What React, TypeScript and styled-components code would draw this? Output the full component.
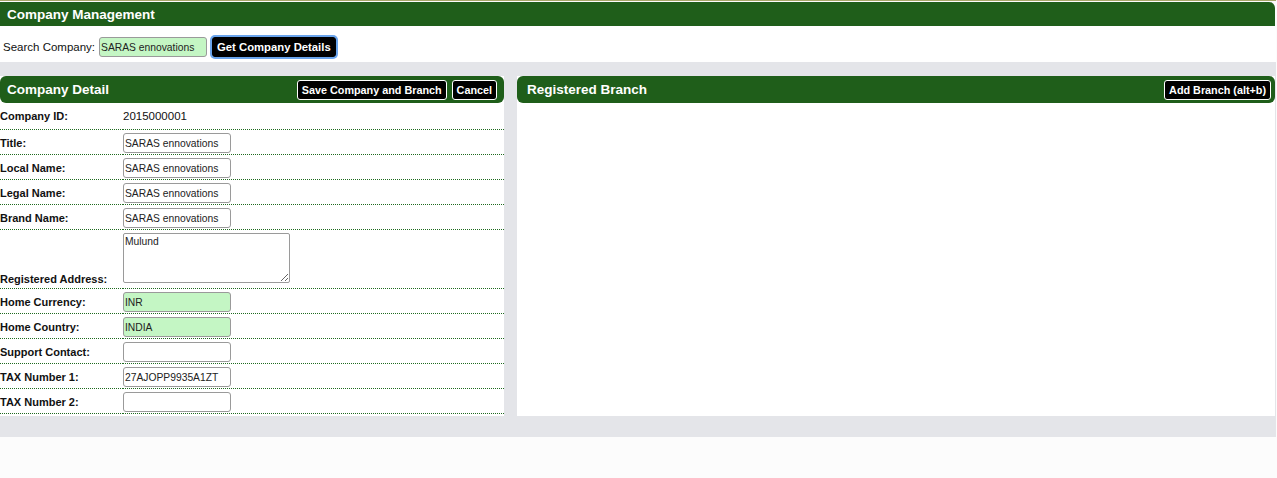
import styled, { createGlobalStyle } from 'styled-components';

const GREEN = '#1f5e1a';
const GRAY = '#e4e5e9';
const FIELD_GREEN = '#c4f6c4';

const GlobalStyle = createGlobalStyle`
  body {
    margin: 0;
    background: #fcfcfc;
    font-family: "Liberation Sans", Arial, sans-serif;
  }
`;

const Page = styled.div`
  width: 1276px;
  border-top: 1px solid #a8a66a;
  padding-top: 1px;
`;

const TitleBar = styled.div`
  height: 24px;
  background: ${GREEN};
  border-radius: 0 6px 0 0;
  margin-right: 1px;
  display: flex;
  align-items: center;
  padding-left: 7px;
  color: #fff;
  font-weight: bold;
  font-size: 13.5px;
`;

const SearchRow = styled.div`
  height: 30px;
  padding: 6px 0 0 3px;
  background: #fff;
  display: flex;
  align-items: center;
  font-size: 11.5px;
  color: #111;
`;

const SearchLabel = styled.span`
  margin-right: 4px;
`;

const Field = styled.input<{ $filled?: boolean; $width?: number }>`
  box-sizing: border-box;
  width: ${({ $width }) => $width ?? 108}px;
  height: 20px;
  margin: 0;
  padding: 0 1px;
  border: 1px solid #9a9a9a;
  border-radius: 3px;
  background: ${({ $filled }) => ($filled ? FIELD_GREEN : '#fff')};
  font-family: "Liberation Sans", Arial, sans-serif;
  font-size: 10.3px;
  color: #222;
  outline: none;
`;

const Area = styled.textarea`
  box-sizing: border-box;
  width: 167px;
  height: 50px;
  margin: 0;
  padding: 2px 1px;
  border: 1px solid #9a9a9a;
  border-radius: 2px;
  background: #fff;
  font-family: "Liberation Sans", Arial, sans-serif;
  font-size: 10.3px;
  color: #222;
  vertical-align: baseline;
  resize: both;
`;

const DarkButton = styled.button<{ $focused?: boolean }>`
  height: 20px;
  margin: 0;
  padding: 0 4px;
  background: #000;
  color: #fff;
  border: 1px solid #fff;
  border-radius: 3px;
  font-family: "Liberation Sans", Arial, sans-serif;
  font-weight: bold;
  font-size: 10.8px;
  white-space: nowrap;
  cursor: pointer;
  box-shadow: ${({ $focused }) => ($focused ? '0 0 0 2px #6aa4ec' : 'none')};
`;

const SearchButton = styled(DarkButton)`
  margin-left: 5px;
  height: 20px;
  padding: 0 4px;
  font-size: 11.3px;
  border-color: #000;
`;

const Content = styled.div`
  background: ${GRAY};
  padding: 14px 1px 21px 0;
  display: flex;
  gap: 13px;
  align-items: stretch;
`;

const Panel = styled.section<{ $width?: number }>`
  background: #fff;
  ${({ $width }) => ($width ? `width: ${$width}px; flex: none;` : 'flex: 1;')}
  display: flex;
  flex-direction: column;
`;

const PanelHeader = styled.div<{ $left: number; $right: number }>`
  height: 27px;
  background: ${GREEN};
  border-radius: 6px;
  display: flex;
  align-items: center;
  padding: 0 ${({ $right }) => $right}px 0 ${({ $left }) => $left}px;
  color: #fff;
  font-weight: bold;
  font-size: 13.5px;
`;

const HeaderTitle = styled.span`
  flex: 1;
  margin-top: -1px;
`;

const HeaderActions = styled.div`
  display: flex;
  gap: 5px;
  padding-top: 1px;
`;

const FormTable = styled.table`
  width: 100%;
  border-collapse: collapse;
  margin-bottom: 2px;
`;

const Row = styled.tr`
  border-bottom: 1px dotted #1f6a1f;
`;

const LabelCell = styled.td<{ $pad?: string }>`
  width: 123px;
  padding: ${({ $pad }) => $pad ?? '3px 0 1px 0'};
  vertical-align: baseline;
  font-weight: bold;
  font-size: 11px;
  color: #111;
  white-space: nowrap;
`;

const ValueCell = styled.td<{ $pad?: string }>`
  padding: ${({ $pad }) => $pad ?? '3px 0 1px 0'};
  vertical-align: baseline;
  font-size: 11.5px;
  color: #111;
`;

type FieldRow = { label: string; value: string; filled?: boolean };

const fields: FieldRow[] = [
  { label: 'Title:', value: 'SARAS ennovations' },
  { label: 'Local Name:', value: 'SARAS ennovations' },
  { label: 'Legal Name:', value: 'SARAS ennovations' },
  { label: 'Brand Name:', value: 'SARAS ennovations' },
];

const lowerFields: FieldRow[] = [
  { label: 'Home Currency:', value: 'INR', filled: true },
  { label: 'Home Country:', value: 'INDIA', filled: true },
  { label: 'Support Contact:', value: '' },
  { label: 'TAX Number 1:', value: '27AJOPP9935A1ZT' },
  { label: 'TAX Number 2:', value: '' },
];

const renderField = (f: FieldRow) => (
  <Row key={f.label}>
    <LabelCell>{f.label}</LabelCell>
    <ValueCell>
      <Field $filled={f.filled} defaultValue={f.value} />
    </ValueCell>
  </Row>
);

const App = () => {
  return (
    <Page>
      <GlobalStyle />
      <TitleBar>Company Management</TitleBar>
      <SearchRow>
        <SearchLabel>Search Company:</SearchLabel>
        <Field $filled defaultValue="SARAS ennovations" />
        <SearchButton $focused>Get Company Details</SearchButton>
      </SearchRow>
      <Content>
        <Panel $width={504}>
          <PanelHeader $left={7} $right={7}>
            <HeaderTitle>Company Detail</HeaderTitle>
            <HeaderActions>
              <DarkButton>Save Company and Branch</DarkButton>
              <DarkButton>Cancel</DarkButton>
            </HeaderActions>
          </PanelHeader>
          <FormTable>
            <tbody>
              <Row>
                <LabelCell $pad="7px 0 7px 0">Company ID:</LabelCell>
                <ValueCell $pad="7px 0 7px 0">2015000001</ValueCell>
              </Row>
              {fields.map(renderField)}
              <Row>
                <LabelCell $pad="3px 0 3px 0">Registered Address:</LabelCell>
                <ValueCell $pad="3px 0 3px 0">
                  <Area defaultValue="Mulund" />
                </ValueCell>
              </Row>
              {lowerFields.map(renderField)}
            </tbody>
          </FormTable>
        </Panel>
        <Panel>
          <PanelHeader $left={10} $right={4}>
            <HeaderTitle>Registered Branch</HeaderTitle>
            <HeaderActions>
              <DarkButton>Add Branch (alt+b)</DarkButton>
            </HeaderActions>
          </PanelHeader>
        </Panel>
      </Content>
    </Page>
  );
};

export default App;
